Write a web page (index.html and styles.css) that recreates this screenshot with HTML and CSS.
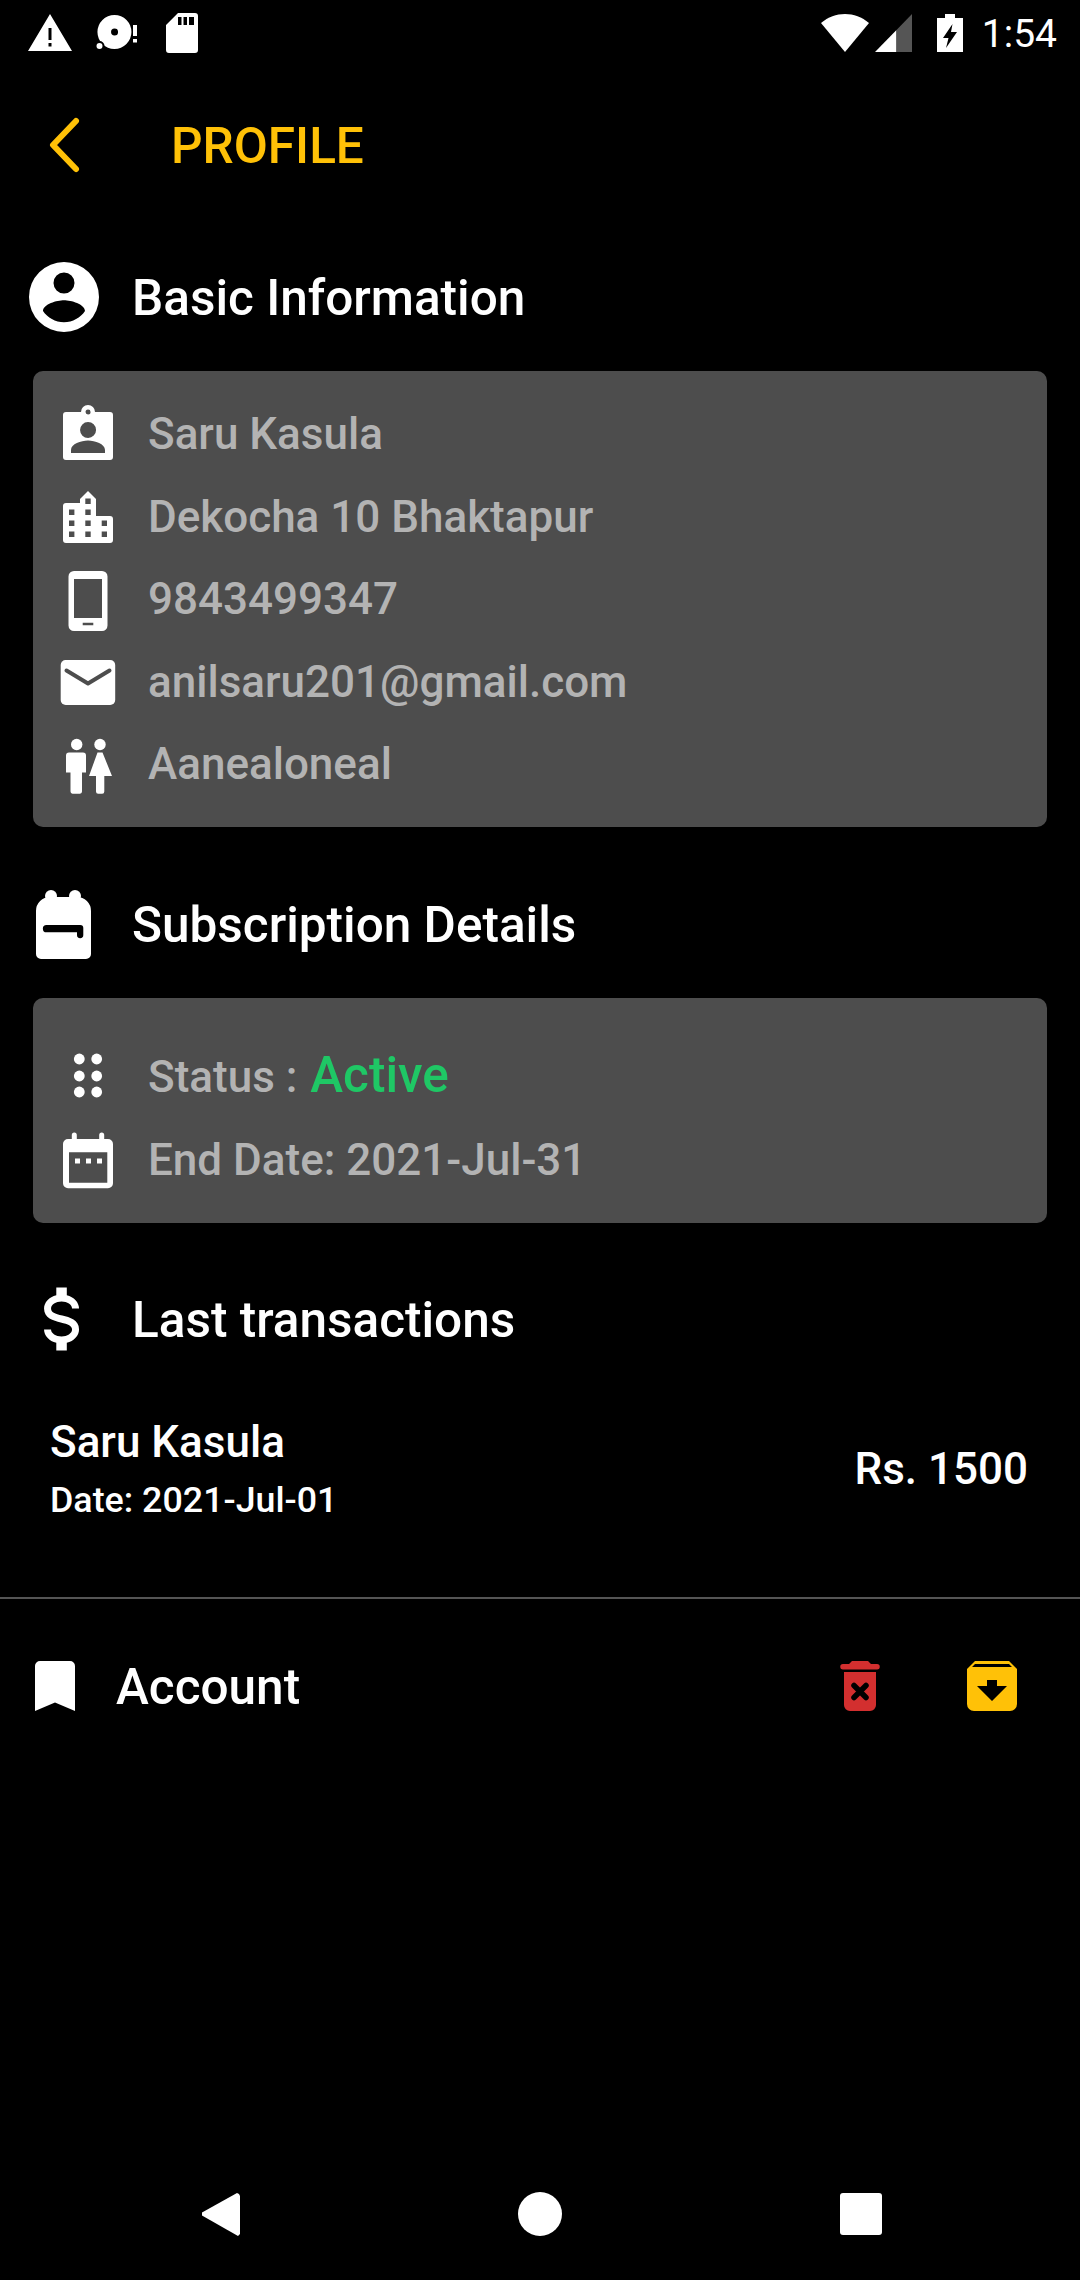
FILE: index.html
```html
<!DOCTYPE html>
<html>

<head>
	<title>Profile</title>
	<meta charset="UTF-8">
	<meta name="viewport" content="width=device-width, initial-scale=1.0">
	<link rel="stylesheet" href="styles.css">
</head>

<body>
	<div class="page">
		<div class="status-bar">
			<svg class="ic-warn" viewBox="0 0 44 37">
				<path fill="#fff" fill-rule="evenodd" d="M22 0L44 37H0ZM20.500 14V26H23.500V14ZM20.500 29V32.500H23.500V29Z" />
			</svg>
			<svg class="ic-disc" viewBox="0 0 41 35">
				<path fill="#fff" fill-rule="evenodd" d="M18.500 0A17 17 0 1 1 18.400 34A17 17 0 0 1 18.500 0ZM18.500 13.500A3.500 3.500 0 1 0 18.600 20.500A3.500 3.500 0 0 0 18.500 13.500Z" />
				<circle cx="3.500" cy="31" r="4" fill="#fff" stroke="#000" stroke-width="2" />
				<path fill="#fff" d="M37 10H41V21H37ZM37 24H41V27.500H37Z" />
			</svg>
			<svg class="ic-sd" viewBox="0 0 32 40">
				<path fill="#fff" fill-rule="evenodd" d="M12 0H29A3 3 0 0 1 32 3V37A3 3 0 0 1 29 40H3A3 3 0 0 1 0 37V12ZM12 4V12H15.500V4ZM17.500 4V12H21V4ZM23 4V12H28V4Z" />
			</svg>
			<div class="status-right">
				<svg class="ic-wifi" viewBox="0 0 48 38">
					<path fill="#fff" d="M24 38L0 9C14 -3 34 -3 48 9Z" />
				</svg>
				<svg class="ic-signal" viewBox="0 0 37 38">
					<path fill="#fff" d="M0 38L21.500 16V38Z" />
					<path fill="#555" d="M21.500 16L37 0V38H21.500Z" />
				</svg>
				<svg class="ic-battery" viewBox="0 0 26 38">
					<path fill="#fff" fill-rule="evenodd" d="M8 0H18V4H26V38H0V4H8ZM15.500 10L6 24H11.500L9 34L20 18H14Z" />
				</svg>
				<span class="clock">1:54</span>
			</div>
		</div>

		<div class="top-bar">
			<svg class="back" viewBox="0 0 30 54">
				<path d="M27 3L4 27L27 51" fill="none" stroke="#ffc107" stroke-width="6" stroke-linecap="round" stroke-linejoin="round" />
			</svg>
			<h1>PROFILE</h1>
		</div>

		<div class="heading">
			<svg class="heading-icon" viewBox="0 0 24 24">
				<path fill="#fff" d="M12,19.2C9.5,19.2 7.29,17.92 6,16C6.03,14 10,12.9 12,12.9C14,12.9 17.97,14 18,16C16.71,17.92 14.5,19.2 12,19.2M12,5A3,3 0 0,1 15,8A3,3 0 0,1 12,11A3,3 0 0,1 9,8A3,3 0 0,1 12,5M12,2A10,10 0 0,0 2,12A10,10 0 0,0 12,22A10,10 0 0,0 22,12A10,10 0 0,0 12,2Z" />
			</svg>
			<h2>Basic Information</h2>
		</div>
		<div class="card card-info">
			<div class="row">
				<svg class="row-icon" viewBox="0 0 60 60">
					<path fill="#fff" fill-rule="evenodd" d="M8 8H23A7 7 0 0 1 37 8H52A3 3 0 0 1 55 11V53A3 3 0 0 1 52 56H8A3 3 0 0 1 5 53V11A3 3 0 0 1 8 8ZM30 5.500A2.500 2.500 0 1 0 30.100 10.500A2.500 2.500 0 0 0 30 5.500ZM30 18A8 8 0 1 0 30.100 34A8 8 0 0 0 30 18ZM13 49H47V46C47 40 37 36.500 30 36.500C23 36.500 13 40 13 46Z" />
				</svg>
				<span>Saru Kasula</span>
			</div>
			<div class="row">
				<svg class="row-icon" viewBox="0 0 60 60">
					<path fill="#fff" fill-rule="evenodd" d="M30 4L38 12V29H52A3 3 0 0 1 55 32V53A3 3 0 0 1 52 56H8A3 3 0 0 1 5 53V19A3 3 0 0 1 8 16H22V12ZM27.300 11.500V17H32.700V11.500ZM11 22.500V28H16.400V22.500ZM27.300 22.500V28H32.700V22.500ZM11 33.500V39H16.400V33.500ZM27.300 33.500V39H32.700V33.500ZM43.700 33.500V39H49V33.500ZM11 44.500V50H16.400V44.500ZM27.300 44.500V50H32.700V44.500ZM43.700 44.500V50H49V44.500Z" />
				</svg>
				<span>Dekocha 10 Bhaktapur</span>
			</div>
			<div class="row">
				<svg class="row-icon" viewBox="0 0 60 60">
					<path fill="#fff" fill-rule="evenodd" d="M16 2H44A5.500 5.500 0 0 1 49.500 7.500V56.500A5.500 5.500 0 0 1 44 62H16A5.500 5.500 0 0 1 10.500 56.500V7.500A5.500 5.500 0 0 1 16 2ZM16 10V49H44V10ZM24.700 53.700V56.300H35.300V53.700Z" />
				</svg>
				<span>9843499347</span>
			</div>
			<div class="row">
				<svg class="row-icon" viewBox="0 0 60 60">
					<rect x="2.700" y="8" width="54.500" height="45" rx="5" fill="#fff" />
					<path d="M8.500 18.500L30 31.500L51.500 18.500" fill="none" stroke="#4d4d4d" stroke-width="4" stroke-linecap="round" stroke-linejoin="round" />
				</svg>
				<span>anilsaru201@gmail.com</span>
			</div>
			<div class="row">
				<svg class="row-icon" viewBox="0 0 60 60">
					<circle cx="18.700" cy="10.500" r="5.700" fill="#fff" />
					<circle cx="42" cy="10.500" r="5.700" fill="#fff" />
					<path fill="#fff" d="M11 18.500H25A3 3 0 0 1 28 21.500V38.500H24V57.500A2.200 2.200 0 0 1 22 59.700H14.500A2.200 2.200 0 0 1 12.500 57.500V38.500H8V21.500A3 3 0 0 1 11 18.500Z" />
					<path fill="#fff" d="M39.500 18.500H44.500L54 42H46.300V57.500A2.200 2.200 0 0 1 44 59.700H40.200A2.200 2.200 0 0 1 38 57.500V42H31Z" />
				</svg>
				<span>Aanealoneal</span>
			</div>
		</div>

		<div class="heading heading-next">
			<svg class="heading-icon" viewBox="0 0 84 84">
				<circle cx="29" cy="14" r="6" fill="#fff" />
				<circle cx="53" cy="14" r="6" fill="#fff" />
				<path fill="#fff" fill-rule="evenodd" d="M28 15H55A14 14 0 0 1 69 29V72A5 5 0 0 1 64 77H19A5 5 0 0 1 14 72V29A14 14 0 0 1 28 15ZM24.500 43A3.600 3.600 0 0 0 24.500 50.300H55V53A3 3 0 0 0 61.300 53V46A3 3 0 0 0 58.300 43Z" />
			</svg>
			<h2>Subscription Details</h2>
		</div>
		<div class="card card-sub">
			<div class="row row-tall">
				<svg class="row-icon" viewBox="0 0 60 60">
					<g fill="#fff">
						<circle cx="21.300" cy="14" r="5.400" />
						<circle cx="38.700" cy="14" r="5.400" />
						<circle cx="21.300" cy="31" r="5.400" />
						<circle cx="38.700" cy="31" r="5.400" />
						<circle cx="21.300" cy="47" r="5.400" />
						<circle cx="38.700" cy="47" r="5.400" />
					</g>
				</svg>
				<span>Status : <b class="active">Active</b></span>
			</div>
			<div class="row row-tall">
				<svg class="row-icon" viewBox="0 0 60 60">
					<path fill="#fff" fill-rule="evenodd" d="M13.800 5A2.500 2.500 0 0 1 18.800 5V9H41.200V5A2.500 2.500 0 0 1 46.200 5V9H50A5 5 0 0 1 55 14V53.300A5 5 0 0 1 50 58.300H10A5 5 0 0 1 5 53.300V14A5 5 0 0 1 10 9H13.800ZM11 22.300V52.700H49.300V22.300ZM17 28.500H22V33.500H17ZM28 28.500H33V33.500H28ZM39 28.500H44V33.500H39Z" />
				</svg>
				<span>End Date: 2021-Jul-31</span>
			</div>
		</div>

		<div class="heading heading-next heading-last">
			<svg class="heading-icon" viewBox="0 0 24 24">
				<path fill="#fff" transform="translate(-0.7 0)" d="M7,15H9C9,16.08 10.37,17 12,17C13.63,17 15,16.08 15,15C15,13.9 13.96,13.5 11.76,12.97C9.64,12.44 7,11.78 7,9C7,7.21 8.47,5.69 10.5,5.18V3H13.5V5.18C15.53,5.69 17,7.21 17,9H15C15,7.92 13.63,7 12,7C10.37,7 9,7.92 9,9C9,10.1 10.04,10.5 12.24,11.03C14.36,11.56 17,12.22 17,15C17,16.79 15.53,18.31 13.5,18.82V21H10.5V18.82C8.47,18.31 7,16.79 7,15Z" />
			</svg>
			<h2>Last transactions</h2>
		</div>
		<div class="transaction">
			<div class="transaction-left">
				<div class="transaction-name">Saru Kasula</div>
				<div class="transaction-date">Date: 2021-Jul-01</div>
			</div>
			<div class="transaction-amount">Rs. 1500</div>
		</div>
		<hr class="divider">

		<div class="account">
			<svg class="ic-bookmark" viewBox="0 0 40 50">
				<path fill="#fff" d="M5 0H35A5 5 0 0 1 40 5V50L20 41.500L0 50V5A5 5 0 0 1 5 0Z" />
			</svg>
			<h2>Account</h2>
			<svg class="ic-trash" viewBox="0 0 38 50">
				<path fill="#d32f2f" fill-rule="evenodd" d="M11 0H27L30 3H36A2.600 2.600 0 0 1 36 8.500H2A2.600 2.600 0 0 1 2 3H8ZM3 11H35V44A6 6 0 0 1 29 50H9A6 6 0 0 1 3 44Z" />
				<path d="M13 24.500L25 36.500M25 24.500L13 36.500" stroke="#000" stroke-width="5.500" stroke-linecap="round" />
			</svg>
			<svg class="ic-archive" viewBox="0 0 50 50">
				<path fill="#ffc107" fill-rule="evenodd" d="M8 0H42L50 8V43A7 7 0 0 1 43 50H7A7 7 0 0 1 0 43V8ZM8 3L5 6H45L42 3ZM20 19V25H10L25 40L40 25H30V19Z" />
			</svg>
		</div>

		<div class="nav-bar">
			<svg class="nav-icon" viewBox="0 0 48 48">
				<path fill="#fff" d="M43 4L44 6V44L42 46L6 25.500V22.500L41 3Z" />
			</svg>
			<svg class="nav-icon" viewBox="0 0 48 48">
				<circle cx="24" cy="24" r="22" fill="#fff" />
			</svg>
			<svg class="nav-icon" viewBox="0 0 48 48">
				<rect x="3" y="3" width="42" height="42" rx="3" fill="#fff" />
			</svg>
		</div>
	</div>
</body>

</html>
```

FILE: styles.css
```css
* {
	box-sizing: border-box;
}

body {
	margin: 0;
	padding: 0;
	background-color: #000;
	font-family: Roboto, "Liberation Sans", sans-serif;
	color: #fff;
}

.page {
	display: flex;
	flex-direction: column;
	height: 2280px;
	overflow: hidden;
}

svg {
	display: block;
	flex: none;
	overflow: visible;
}

/* status bar */
.status-bar {
	display: flex;
	align-items: flex-start;
	height: 60px;
	padding-left: 28px;
}

.ic-warn {
	width: 44px;
	height: 37px;
	margin-top: 14px;
}

.ic-disc {
	width: 41px;
	height: 35px;
	margin: 15px 0 0 24px;
}

.ic-sd {
	width: 32px;
	height: 40px;
	margin: 13px 0 0 29px;
}

.status-right {
	display: flex;
	align-items: flex-start;
	margin-left: auto;
	padding-right: 23px;
}

.ic-wifi {
	width: 48px;
	height: 38px;
	margin-top: 14px;
}

.ic-signal {
	width: 37px;
	height: 38px;
	margin: 14px 0 0 6px;
}

.ic-battery {
	width: 26px;
	height: 38px;
	margin: 14px 0 0 25px;
}

.clock {
	margin-left: 19px;
	font-size: 39px;
	line-height: 46px;
	margin-top: 11px;
}

/* header */
.top-bar {
	display: flex;
	align-items: center;
	height: 170px;
	padding-left: 49px;
}

.back {
	width: 30px;
	height: 54px;
}

h1 {
	margin: 0 0 0 92px;
	padding-top: 2px;
	font-size: 49.500px;
	font-weight: 500;
	color: #ffc107;
}

h2 {
	margin: 0;
	padding-top: 2px;
	font-size: 49.500px;
	font-weight: 500;
}

.heading {
	display: flex;
	align-items: center;
	height: 90px;
	margin-top: 22px;
	padding-left: 22px;
}

.heading-next {
	margin-top: 52px;
}

.heading-last {
	margin-top: 51px;
}

.heading-icon {
	width: 84px;
	height: 84px;
	margin-right: 26px;
}

/* cards */
.card {
	margin: 29px 33px 0;
	padding-left: 25px;
	background-color: #4d4d4d;
	border-radius: 10px;
	color: #b3b3b3;
	font-size: 44px;
	font-weight: 500;
}

.card-info {
	height: 456px;
	padding-top: 22px;
}

.card-sub {
	height: 225px;
	padding-top: 34px;
}

.row {
	display: flex;
	align-items: center;
	height: 82.5px;
}

.row-tall {
	height: 85px;
}

.row-icon {
	width: 60px;
	height: 60px;
	margin-right: 30px;
}

.active {
	font-size: 49.500px;
	font-weight: 500;
	color: #1fc765;
	margin-left: 2px;
}

/* transactions */
.transaction {
	display: flex;
	align-items: center;
	justify-content: space-between;
	margin-top: 48px;
	padding: 0 52px 0 50px;
}

.transaction-name {
	font-size: 44px;
	font-weight: 500;
	line-height: 60px;
}

.transaction-date {
	font-size: 35.800px;
	font-weight: 500;
	line-height: 56px;
}

.transaction-amount {
	font-size: 44px;
	font-weight: 500;
	margin-bottom: 2px;
}

.divider {
	width: 100%;
	height: 2px;
	margin: 69px 0 0;
	border: 0;
	background-color: #555;
}

/* account row */
.account {
	display: flex;
	align-items: center;
	height: 100px;
	margin-top: 37px;
	padding: 0 63px 0 35px;
}

.account h2 {
	margin-left: 41px;
}

.ic-bookmark {
	width: 40px;
	height: 50px;
}

.ic-trash {
	width: 38px;
	height: 50px;
	margin-left: auto;
	margin-right: 88px;
}

.ic-archive {
	width: 50px;
	height: 50px;
}

/* nav */
.nav-bar {
	display: flex;
	justify-content: center;
	gap: 272.500px;
	height: 132px;
	margin-top: auto;
	padding-top: 42px;
}

.nav-icon {
	width: 48px;
	height: 48px;
}
```
